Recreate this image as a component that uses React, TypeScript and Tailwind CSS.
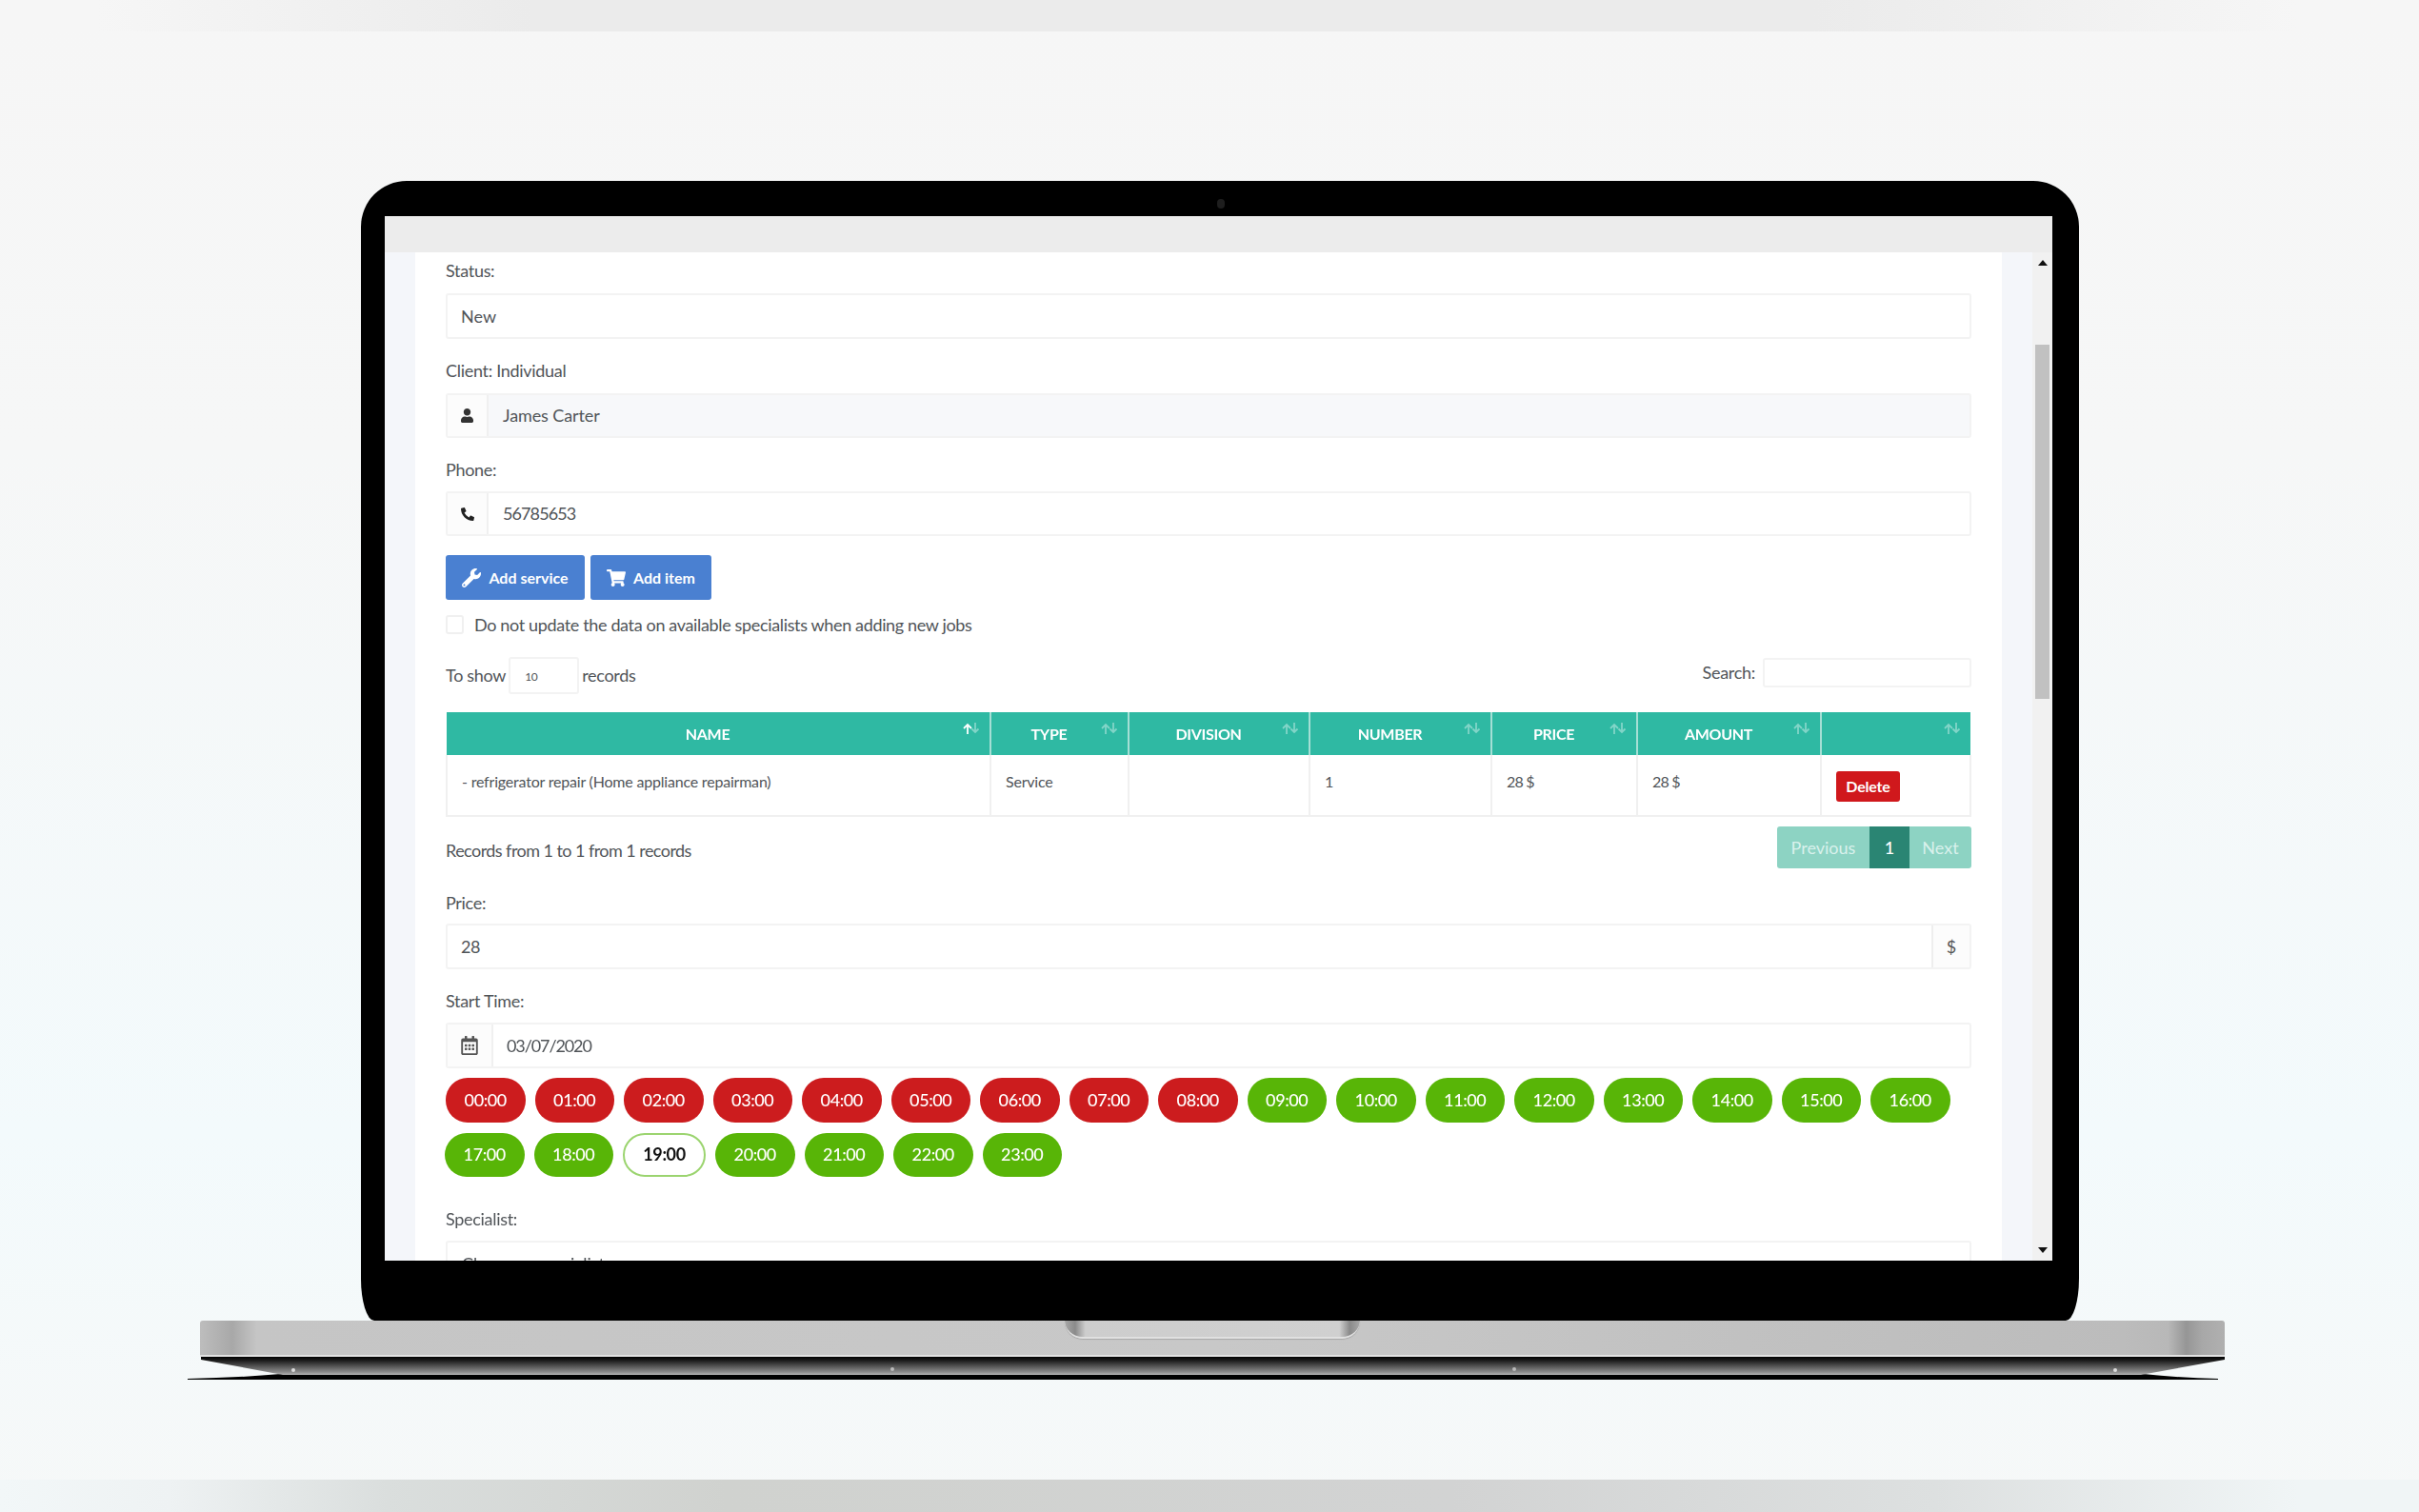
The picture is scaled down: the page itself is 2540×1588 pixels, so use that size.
import React from "react";
import { FaUser, FaPhoneAlt, FaWrench, FaShoppingCart, FaRegCalendarAlt } from "react-icons/fa";

const hours = Array.from({ length: 24 }, (_, i) => `${String(i).padStart(2, "0")}:00`);

const columns = [
  { name: "NAME", width: "w-[571px]" },
  { name: "TYPE", width: "w-[145px]" },
  { name: "DIVISION", width: "w-[190px]" },
  { name: "NUMBER", width: "w-[191px]" },
  { name: "PRICE", width: "w-[153px]" },
  { name: "AMOUNT", width: "w-[193px]" },
  { name: "", width: "w-[157px]" },
];

const SortIcon = ({ active }: { active?: boolean }) => (
  <svg viewBox="0 0 20 12" className="absolute top-[11px] right-[9px] w-[20px] h-[12px]" fill="none" stroke="white" strokeWidth="1.8">
    <path d="M6 12V2M2 6l4-4 4 4" opacity={active ? 1 : 0.4} />
    <path d="M14 0v10M10.500 6.500l3.500 3.500 3.500-3.500" opacity="0.4" />
  </svg>
);

const Label = ({ children }: { children: React.ReactNode }) => (
  <div className="h-[24px] leading-[24px] text-[18px] text-[#505458] tracking-[-0.3px]">{children}</div>
);

const Addon = ({ children, className = "" }: { children: React.ReactNode; className?: string }) => (
  <div className={`flex items-center justify-center bg-[#fcfcfc] text-[#222] ${className}`}>{children}</div>
);

const Pill = ({ time, index }: { time: string; index: number }) => {
  if (time === "19:00") {
    return (
      <div className="w-[87px] h-[46px] rounded-[23px] bg-white border-2 border-[#9bd46f] flex items-center justify-center text-[18px] font-bold text-[#111] tracking-[-0.4px]">
        {time}
      </div>
    );
  }
  const color = index < 9 ? "bg-[#cc1c1e]" : "bg-[#58b507]";
  return (
    <div className={`w-[83.500px] h-[46.500px] rounded-[23px] ${color} ${index === 17 ? "-ml-[1px]" : ""} flex items-center justify-center text-[18px] font-medium text-white tracking-[-0.4px]`}>
      {time}
    </div>
  );
};

const Form = () => (
  <div className="flex-1 min-w-0 bg-white px-[32px] pt-[7px] text-[#505458]">
    <Label>Status:</Label>
    <div className="mt-[12px] h-[48px] border-2 border-[#f3f3f3] rounded-[3px] flex items-center pl-[14px] text-[18px]">New</div>

    <div className="mt-[21px]"><Label>Client: Individual</Label></div>
    <div className="mt-[12px] h-[47px] border-2 border-[#f3f3f3] rounded-[3px] flex bg-[#f7f8fa]">
      <Addon className="w-[43px] border-r-2 border-[#f0f0f0]"><FaUser className="w-[13px] h-[15px] text-[#333]" /></Addon>
      <div className="flex-1 flex items-center pl-[15px] text-[18px] tracking-[-0.1px]">James Carter</div>
    </div>

    <div className="mt-[21px]"><Label>Phone:</Label></div>
    <div className="mt-[11px] h-[47px] border-2 border-[#f3f3f3] rounded-[3px] flex">
      <Addon className="w-[43px] border-r-2 border-[#f0f0f0]"><FaPhoneAlt className="w-[14px] h-[14px] text-[#222]" /></Addon>
      <div className="flex-1 flex items-center pl-[15px] text-[18px] tracking-[-0.9px]">56785653</div>
    </div>

    <div className="mt-[20px] flex gap-[6px]">
      <div className="w-[146px] h-[47px] rounded-[3px] bg-[#4a80d1] text-white font-bold text-[16px] flex items-center justify-center gap-[8px]">
        <FaWrench className="w-[20px] h-[20px]" /> Add service
      </div>
      <div className="w-[127px] h-[47px] rounded-[3px] bg-[#4a80d1] text-white font-bold text-[16px] flex items-center justify-center gap-[8px]">
        <FaShoppingCart className="w-[20px] h-[20px]" /> Add item
      </div>
    </div>

    <div className="mt-[16px] h-[20px] flex items-center gap-[11px] text-[18px]">
      <div className="w-[19px] h-[20px] border-2 border-[#f0f0f0] rounded-[3px]"></div>
      <div className="tracking-[-0.35px]">Do not update the data on available specialists when adding new jobs</div>
    </div>

    <div className="mt-[24px] h-[39px] flex justify-between items-start text-[18px]">
      <div className="flex items-center h-[39px] gap-[3px] tracking-[-0.3px]">
        <span>To show</span>
        <div className="w-[74px] h-[39px] border-2 border-[#f3f3f3] rounded-[3px] pl-[15px] pt-[10px] text-[12px]">10</div>
        <span>records</span>
      </div>
      <div className="flex items-center gap-[8px] mt-[1px]">
        <span className="tracking-[-0.3px]">Search:</span>
        <div className="w-[219px] h-[31px] border-2 border-[#f3f3f3] rounded-[3px]"></div>
      </div>
    </div>

    <table className="mt-[19px] w-[1600px] table-fixed border-collapse">
      <thead>
        <tr className="h-[45px] bg-[#2fb9a3]">
          {columns.map((c, i) => (
            <th key={i} className={`${c.width} relative pl-[8px] pr-[30px] text-center text-white text-[16px] font-bold border-r-2 last:border-r-0 border-[#a5dfd5] tracking-[-0.3px]`}>
              {c.name}
              <SortIcon active={i === 0} />
            </th>
          ))}
        </tr>
      </thead>
      <tbody>
        <tr className="h-[64px] align-top text-[16px] text-[#505458] tracking-[-0.2px]">
          <td className="pl-[15px] pt-[16px] border-2 border-t-0 border-[#f0f0f0]">- refrigerator repair (Home appliance repairman)</td>
          <td className="pl-[15px] pt-[16px] border-2 border-t-0 border-[#f0f0f0]">Service</td>
          <td className="border-2 border-t-0 border-[#f0f0f0]"></td>
          <td className="pl-[15px] pt-[16px] border-2 border-t-0 border-[#f0f0f0]">1</td>
          <td className="pl-[15px] pt-[16px] border-2 border-t-0 border-[#f0f0f0] tracking-[-0.8px]">28 $</td>
          <td className="pl-[15px] pt-[16px] border-2 border-t-0 border-[#f0f0f0] tracking-[-0.8px]">28 $</td>
          <td className="pl-[15px] pt-[17px] border-2 border-t-0 border-[#f0f0f0]">
            <div className="w-[67px] h-[32px] rounded-[3px] bg-[#d0181c] text-white font-bold text-[16px] flex items-center justify-center">Delete</div>
          </td>
        </tr>
      </tbody>
    </table>

    <div className="mt-[10px] flex justify-between items-start">
      <div className="pt-[12px] text-[18px] tracking-[-0.55px]">Records from 1 to 1 from 1 records</div>
      <div className="flex h-[44px] text-[18px] text-[#d9f1ec] rounded-[3px]">
        <div className="w-[97px] bg-[#8dd3c3] rounded-l-[3px] flex items-center justify-center">Previous</div>
        <div className="w-[42px] bg-[#2a8573] text-white flex items-center justify-center font-medium">1</div>
        <div className="w-[65px] bg-[#8dd3c3] rounded-r-[3px] flex items-center justify-center">Next</div>
      </div>
    </div>

    <div className="mt-[24px]"><Label>Price:</Label></div>
    <div className="mt-[10px] h-[48px] border-2 border-[#f3f3f3] rounded-[3px] flex">
      <div className="flex-1 flex items-center pl-[14px] text-[18px] tracking-[-0.5px]">28</div>
      <Addon className="w-[40px] border-l-2 border-[#eeeeee] text-[18px] !text-[#555]">$</Addon>
    </div>

    <div className="mt-[21px]"><Label>Start Time:</Label></div>
    <div className="mt-[11px] h-[48px] border-2 border-[#f3f3f3] rounded-[3px] flex">
      <Addon className="w-[48px] border-r-2 border-[#f0f0f0]"><FaRegCalendarAlt className="w-[18px] h-[20px] text-[#555]" /></Addon>
      <div className="flex-1 flex items-center pl-[14px] text-[18px] tracking-[-1.1px]">03/07/2020</div>
    </div>

    <div className="mt-[10px] flex flex-wrap gap-x-[10px] gap-y-[11px]">
      {hours.map((t, i) => (
        <Pill key={t} time={t} index={i} />
      ))}
    </div>

    <div className="mt-[32px]"><Label>Specialist:</Label></div>
    <div className="mt-[11px] h-[48px] border-2 border-[#f3f3f3] rounded-[3px] flex items-center pl-[15px] text-[18px]">Choose a specialist</div>
  </div>
);

const Scrollbar = () => (
  <div className="w-[21px] bg-[#f1f1f1] flex flex-col items-center">
    <svg viewBox="0 0 10 6" className="mt-[8px] w-[10px] h-[6px]"><path d="M5 0l5 6H0z" fill="#111" /></svg>
    <div className="mt-[83px] w-[15px] h-[372px] bg-[#c1c1c1]"></div>
    <div className="flex-1"></div>
    <svg viewBox="0 0 10 6" className="mb-[8px] w-[10px] h-[6px]"><path d="M0 0h10L5 6z" fill="#111" /></svg>
  </div>
);

const Base = () => (
  <div className="ml-[190px] w-[2160px]">
    <div className="relative ml-[20px] w-[2126px] h-[38px] rounded-t-[3px] border-b-2 border-[#e2e2e2] bg-[linear-gradient(90deg,#bdbdbd_0%,#b4b4b4_0.700%,#a8a8a8_1.600%,#c5c5c5_2.800%,#c8c8c8_50%,#bcbcbc_95%,#b8b8b8_97.200%,#969696_98.100%,#a8a8a8_98.900%,#b0b0b0_100%)]">
      <div className="absolute left-[908px] top-0 w-[310px] h-[19px] rounded-b-[24px] border-b-2 border-[#e0e0e0] shadow-[0_1px_1px_#a8a8a8] bg-[linear-gradient(90deg,#a8a8a8_0%,#8a8a8a_3.500%,#cdcdcd_7%,#d0d0d0_93%,#8a8a8a_96.500%,#a8a8a8_100%)]"></div>
    </div>
    <svg viewBox="0 0 2160 25" className="block w-[2160px] h-[25px]">
      <defs>
        <linearGradient id="under" x1="0" y1="0" x2="0" y2="1">
          <stop offset="0" stopColor="#000" />
          <stop offset="0.2" stopColor="#1c1c1c" />
          <stop offset="0.85" stopColor="#8c8c8c" />
          <stop offset="1" stopColor="#b4b4b4" />
        </linearGradient>
      </defs>
      <path d="M7 23Q60 22 105 18H2060Q2100 22 2139 23V24H7z" fill="#000" />
      <rect x="100" y="19" width="1960" height="5" fill="#000" />
      <path d="M21 0H2146V3L2058 19H107L21 3z" fill="url(#under)" />
      <circle cx="118" cy="14" r="2" fill="#ddd" />
      <circle cx="747" cy="13" r="2" fill="#bbb" />
      <circle cx="1400" cy="13" r="2" fill="#bbb" />
      <circle cx="2031" cy="14" r="2" fill="#ddd" />
    </svg>
  </div>
);

export default function App() {
  return (
    <div className="w-[2540px] h-[1588px] overflow-hidden flex flex-col bg-[linear-gradient(180deg,#f6f6f6_0%,#f6f7f7_30%,#f3fafc_75%,#f6f8f8_100%)] font-['Lato','Noto_Sans',sans-serif]">
      <div className="h-[33px] bg-[linear-gradient(90deg,#f6f6f6_4%,#ebebeb_22%,#ebebeb_75%,#f6f6f6_95%)]"></div>

      <div className="relative mt-[157px] ml-[379px] w-[1804px] h-[1197px] bg-black rounded-t-[48px] rounded-b-[14px_44px] pt-[37px] pl-[25px] pr-[28px]">
        {/* camera */}
        <div className="absolute top-[19px] left-[899px] w-[8px] h-[10px] rounded-full bg-[#1e1e1e]"></div>
        <div className="h-[1097px] flex flex-col overflow-hidden bg-white">
          <div className="h-[38px] bg-[#ececec]"></div>
          <div className="flex-1 min-h-0 flex blur-[0.7px]">
            <div className="w-[32px] bg-[#f4f6fa]"></div>
            <Form />
            <div className="w-[32px] bg-[#f4f6fa]"></div>
            <Scrollbar />
          </div>
        </div>
      </div>

      <Base />

      <div className="flex-1"></div>
      <div className="h-[34px] bg-[linear-gradient(90deg,#f2f7f8_0%,#eef2f3_7%,#dadedd_16%,#d0d2cf_30%,#d2d3d3_60%,#dde0e0_80%,#f0f5f6_95%)]"></div>
    </div>
  );
}
